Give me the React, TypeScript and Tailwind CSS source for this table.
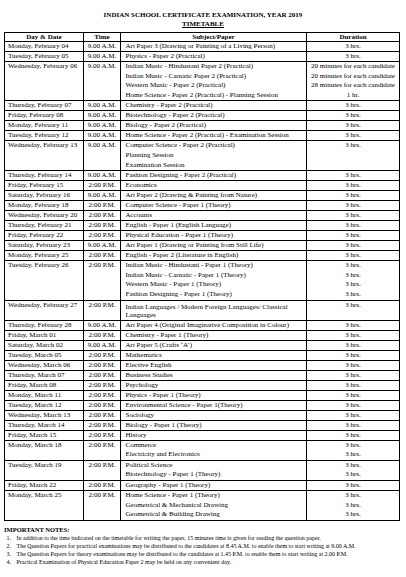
type Row = {
  day: string;
  time: string;
  subjects: string[];
  durations: string[];
  wrap?: boolean;
};

const H = "3 hrs.";
const AM = "9.00 A.M.";
const PM = "2:00 P.M.";

const rows: Row[] = [
  { day: "Monday, February 04", time: AM, subjects: ["Art Paper 3 (Drawing or Painting of a Living Person)"], durations: [H] },
  { day: "Tuesday, February 05", time: AM, subjects: ["Physics - Paper 2 (Practical)"], durations: [H] },
  {
    day: "Wednesday, February 06",
    time: AM,
    subjects: [
      "Indian Music - Hindustani Paper 2 (Practical)",
      "Indian Music - Carnatic Paper 2 (Practical)",
      "Western Music - Paper 2 (Practical)",
      "Home Science - Paper 2 (Practical) - Planning Session",
    ],
    durations: [
      "20 minutes for each candidate",
      "20 minutes for each candidate",
      "28 minutes for each candidate",
      "1 hr.",
    ],
  },
  { day: "Thursday, February 07", time: AM, subjects: ["Chemistry - Paper 2 (Practical)"], durations: [H] },
  { day: "Friday, February 08", time: AM, subjects: ["Biotechnology - Paper 2 (Practical)"], durations: [H] },
  { day: "Monday, February 11", time: AM, subjects: ["Biology - Paper 2 (Practical)"], durations: [H] },
  { day: "Tuesday, February 12", time: AM, subjects: ["Home Science - Paper 2 (Practical) - Examination Session"], durations: [H] },
  {
    day: "Wednesday, February 13",
    time: AM,
    subjects: ["Computer Science - Paper 2 (Practical)", "Planning Session", "Examination Session"],
    durations: [H],
  },
  { day: "Thursday, February 14", time: AM, subjects: ["Fashion Designing - Paper 2 (Practical)"], durations: [H] },
  { day: "Friday, February 15", time: PM, subjects: ["Economics"], durations: [H] },
  { day: "Saturday, February 16", time: AM, subjects: ["Art Paper 2 (Drawing & Painting from Nature)"], durations: [H] },
  { day: "Monday, February 18", time: PM, subjects: ["Computer Science - Paper 1 (Theory)"], durations: [H] },
  { day: "Wednesday, February 20", time: PM, subjects: ["Accounts"], durations: [H] },
  { day: "Thursday, February 21", time: PM, subjects: ["English - Paper 1 (English Language)"], durations: [H] },
  { day: "Friday, February 22", time: PM, subjects: ["Physical Education - Paper 1 (Theory)"], durations: [H] },
  { day: "Saturday, February 23", time: AM, subjects: ["Art Paper 1 (Drawing or Painting from Still Life)"], durations: [H] },
  { day: "Monday, February 25", time: PM, subjects: ["English - Paper 2 (Literature in English)"], durations: [H] },
  {
    day: "Tuesday, February 26",
    time: PM,
    subjects: [
      "Indian Music - Hindustani - Paper 1 (Theory)",
      "Indian Music - Carnatic - Paper 1 (Theory)",
      "Western Music - Paper 1 (Theory)",
      "Fashion Designing - Paper 1 (Theory)",
    ],
    durations: [H, H, H, H],
  },
  {
    day: "Wednesday, February 27",
    time: PM,
    subjects: ["Indian Languages / Modern Foreign Languages/ Classical", "Languages"],
    durations: [H],
    wrap: true,
  },
  { day: "Thursday, February 28", time: AM, subjects: ["Art Paper 4 (Original Imaginative Composition in Colour)"], durations: [H] },
  { day: "Friday, March 01", time: PM, subjects: ["Chemistry - Paper 1 (Theory)"], durations: [H] },
  { day: "Saturday, March 02", time: AM, subjects: ["Art Paper 5 (Crafts \u2018A\u2019)"], durations: [H] },
  { day: "Tuesday, March 05", time: PM, subjects: ["Mathematics"], durations: [H] },
  { day: "Wednesday, March 06", time: PM, subjects: ["Elective English"], durations: [H] },
  { day: "Thursday, March 07", time: PM, subjects: ["Business Studies"], durations: [H] },
  { day: "Friday, March 08", time: PM, subjects: ["Psychology"], durations: [H] },
  { day: "Monday, March 11", time: PM, subjects: ["Physics - Paper 1 (Theory)"], durations: [H] },
  { day: "Tuesday, March 12", time: PM, subjects: ["Environmental Science - Paper 1(Theory)"], durations: [H] },
  { day: "Wednesday, March 13", time: PM, subjects: ["Sociology"], durations: [H] },
  { day: "Thursday, March 14", time: PM, subjects: ["Biology - Paper 1 (Theory)"], durations: [H] },
  { day: "Friday, March 15", time: PM, subjects: ["History"], durations: [H] },
  { day: "Monday, March 18", time: PM, subjects: ["Commerce", "Electricity and Electronics"], durations: [H, H] },
  { day: "Tuesday, March 19", time: PM, subjects: ["Political Science", "Biotechnology - Paper 1 (Theory)"], durations: [H, H] },
  { day: "Friday, March 22", time: PM, subjects: ["Geography - Paper 1 (Theory)"], durations: [H] },
  {
    day: "Monday, March 25",
    time: PM,
    subjects: ["Home Science - Paper 1 (Theory)", "Geometrical & Mechanical Drawing", "Geometrical & Building Drawing"],
    durations: [H, H, H],
  },
];

const notes = [
  "In addition to the time indicated on the timetable for writing the paper, 15 minutes time is given for reading the question paper.",
  "The Question Papers for practical examinations may be distributed to the candidates at 8.45 A.M. to enable them to start writing at 9.00 A.M.",
  "The Question Papers for theory examinations may be distributed to the candidates at 1.45 P.M. to enable them to start writing at 2.00 P.M.",
  "Practical Examination of Physical Education Paper 2 may be held on any convenient day.",
];

const cell = "border border-black align-top p-0 whitespace-nowrap overflow-hidden";

function Lines({ items, multi, wrap }: { items: string[]; multi: boolean; wrap?: boolean }) {
  const lead = wrap ? "leading-[8px] pt-[2.5px] pb-[0.5px]" : multi ? "leading-[9.6px]" : "leading-[9px]";
  return (
    <div className={lead}>
      {items.map((t, i) => (
        <div key={i}>{t}</div>
      ))}
    </div>
  );
}

export default function App() {
  return (
    <div className="w-[406px] h-[577px] bg-white text-black font-['Liberation_Serif',serif] overflow-hidden">
      <div className="pt-[10.5px] text-center font-bold text-[7px] leading-[9px]">
        <div>INDIAN SCHOOL CERTIFICATE EXAMINATION, YEAR 2019</div>
        <div className="underline">TIMETABLE</div>
      </div>

      <table className="mt-[3px] ml-[4px] w-[395px] table-fixed border-collapse text-[7px]">
        <colgroup>
          <col className="w-[79px]" />
          <col className="w-[37px]" />
          <col className="w-[186px]" />
          <col className="w-[93px]" />
        </colgroup>
        <thead>
          <tr className="font-bold text-center leading-[8.5px]">
            <th className={cell}>Day &amp; Date</th>
            <th className={cell}>Time</th>
            <th className={cell}>Subject/Paper</th>
            <th className={cell}>Duration</th>
          </tr>
        </thead>
        <tbody>
          {rows.map((r) => {
            const multi = r.subjects.length > 1 && !r.wrap;
            return (
              <tr key={r.day}>
                <td className={`${cell} pl-[3px]`}>
                  <Lines items={[r.day]} multi={multi} />
                </td>
                <td className={`${cell} text-center`}>
                  <Lines items={[r.time]} multi={multi} />
                </td>
                <td className={`${cell} pl-[4.5px]`}>
                  <Lines items={r.subjects} multi={multi} wrap={r.wrap} />
                </td>
                <td className={`${cell} text-center`}>
                  <Lines items={r.durations} multi={multi} />
                </td>
              </tr>
            );
          })}
        </tbody>
      </table>

      <div className="mt-[4px] pl-[4px]">
        <div className="font-bold text-[6.5px] leading-[9px]">IMPORTANT NOTES:</div>
        <ol className="text-[6px] leading-[8px]">
          {notes.map((n, i) => (
            <li key={i} className="flex whitespace-nowrap">
              <span className="w-[12.5px] pl-[2.5px] shrink-0">{i + 1}.</span>
              <span>{n}</span>
            </li>
          ))}
        </ol>
      </div>
    </div>
  );
}
